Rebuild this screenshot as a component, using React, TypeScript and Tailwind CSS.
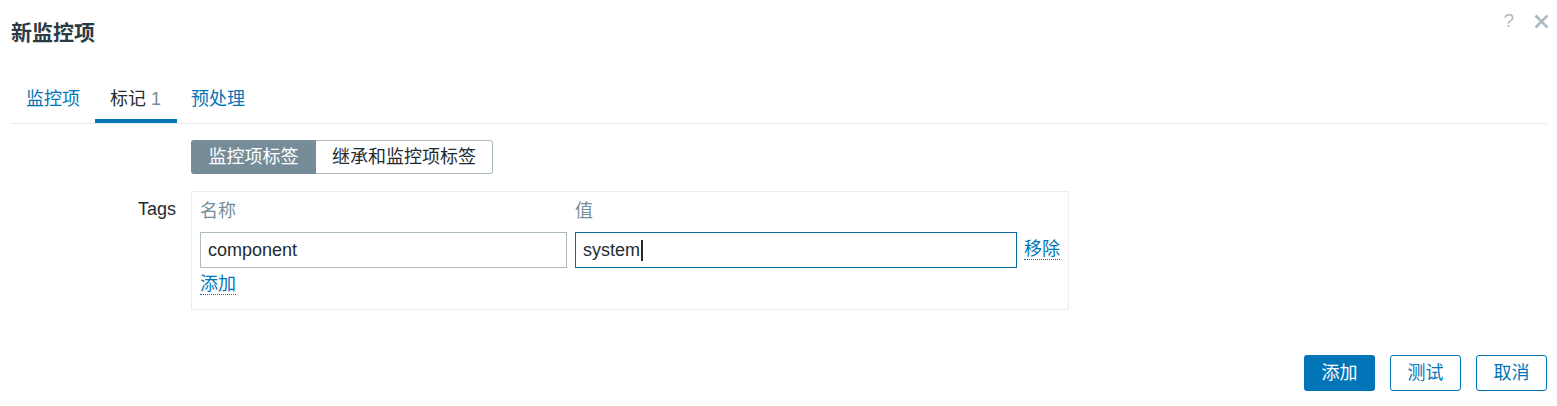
import React from "react";

export default function App() {
  return (
    <div className="w-[1557px] h-[406px] bg-white text-[#1f2c33] text-[18px] leading-[21px] font-['Liberation_Sans','Noto_Sans_CJK_SC',sans-serif] pl-[11px] pr-[10px] overflow-hidden">
      {/* header */}
      <div className="flex items-start justify-between pt-[20px] h-[64px]">
        <h4 className="text-[21px] leading-[26px] font-bold text-[#2c3a44]">新监控项</h4>
        <div className="flex items-center gap-[20px] -mt-[9px] text-[#acbbc2]">
          <span className="text-[19px] leading-[20px]">?</span>
          <svg width="15" height="15" viewBox="0 0 15 15" className="mr-[-2px]">
            <path d="M1.5 1.5 L13.5 13.5 M13.5 1.5 L1.5 13.5" stroke="#acbbc2" strokeWidth="2.6" />
          </svg>
        </div>
      </div>

      {/* tabs */}
      <div className="flex border-b border-[#ebeef0] mt-[24px]">
        <div className="px-[15px] pt-[1px] h-[35px] text-[#0275b8]">监控项</div>
        <div className="pl-[15px] pr-[16px] pt-[1px] h-[35px] border-b-[4px] border-[#0275b8] mb-[-1px] text-[#1f2c33]">
          标记 <span className="text-[#768d99]">1</span>
        </div>
        <div className="px-[14px] pt-[1px] h-[35px] text-[#0275b8]">预处理</div>
      </div>

      {/* form */}
      <div className="flex flex-col mt-[16px]">
        <div className="flex">
          <div className="w-[165px]" />
          <div className="ml-[15px] flex h-[34px]">
            <div className="w-[125px] h-full flex items-center justify-center bg-[#768d99] text-white rounded-l-[3px]">监控项标签</div>
            <div className="w-[177px] h-full flex items-center justify-center bg-white border border-l-0 border-[#acbbc2] rounded-r-[3px] text-[#1f2c33]">继承和监控项标签</div>
          </div>
        </div>

        <div className="flex mt-[17px]">
          <div className="w-[165px] text-right pt-[8px]">Tags</div>
          <div className="ml-[15px] w-[878px] h-[119px] border border-[#ebeef0] pl-[8px] pt-[9px]">
            <div className="flex text-[#768d99] h-[22px]">
              <div className="w-[375px]">名称</div>
              <div>值</div>
            </div>
            <div className="flex items-center mt-[9px]">
              <div className="w-[367px] h-[36px] border border-[#acbbc2] flex items-center pl-[7px]">component</div>
              <div className="ml-[8px] w-[442px] h-[36px] border border-[#0c68a1] flex items-center pl-[7px]">
                system<span className="inline-block w-[2px] h-[21px] bg-[#1f2c33] ml-[1px]" />
              </div>
              <span className="ml-[7px] text-[#0275b8] border-b border-dotted border-[#0275b8] leading-[19px]">移除</span>
            </div>
            <div className="mt-[6px]">
              <span className="text-[#0275b8] border-b border-dotted border-[#0275b8] leading-[19px] inline-block">添加</span>
            </div>
          </div>
        </div>
      </div>

      {/* footer */}
      <div className="flex justify-end gap-[15px] mt-[45px]">
        <button className="w-[71px] h-[36px] rounded-[3px] bg-[#0275b8] text-white">添加</button>
        <button className="w-[71px] h-[36px] rounded-[3px] border border-[#0275b8] text-[#0275b8] bg-white">测试</button>
        <button className="w-[71px] h-[36px] rounded-[3px] border border-[#0275b8] text-[#0275b8] bg-white">取消</button>
      </div>
    </div>
  );
}
